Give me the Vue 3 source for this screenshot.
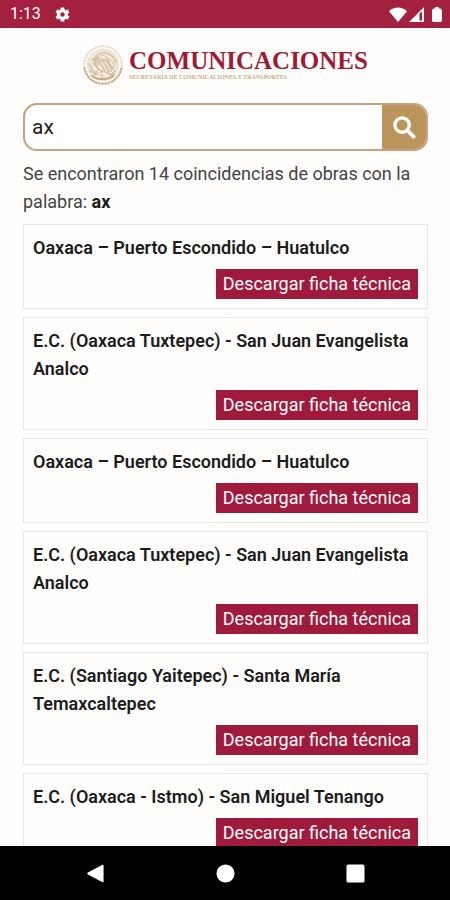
<script setup>
import { ref } from 'vue'

const query = ref('ax')
const total = 14
const works = [
  'Oaxaca – Puerto Escondido – Huatulco',
  'E.C. (Oaxaca Tuxtepec) - San Juan Evangelista Analco',
  'Oaxaca – Puerto Escondido – Huatulco',
  'E.C. (Oaxaca Tuxtepec) - San Juan Evangelista Analco',
  'E.C. (Santiago Yaitepec) - Santa María Temaxcaltepec',
  'E.C. (Oaxaca - Istmo) - San Miguel Tenango',
]
</script>

<template>
  <div class="screen">
    <div class="status">
      <div class="status-group">
        <span class="clock">1:13</span>
        <svg class="gear" viewBox="0 0 24 24" aria-hidden="true">
          <path fill="currentColor" fill-rule="evenodd" d="M19.4 13c.1-.3.1-.7.1-1s0-.7-.1-1l2.100-1.600c.2-.2.3-.4.100-.700l-2-3.400c-.1-.3-.4-.3-.6-.3l-2.500 1c-.5-.4-1.100-.7-1.700-1L14.400 2.400c0-.2-.2-.4-.5-.4h-4c-.2 0-.4.2-.5.4L9.100 5c-.6.300-1.200.600-1.700 1l-2.500-1c-.2-.1-.5 0-.6.300l-2 3.400c-.1.200-.1.500.1.700L4.500 11c0 .300-.1.700-.1 1s0 .7.100 1l-2.100 1.600c-.2.200-.2.400-.1.700l2 3.400c.1.300.4.300.6.300l2.500-1c.5.400 1.100.700 1.700 1l.4 2.600c0 .2.200.4.500.4h4c.2 0 .4-.2.500-.4l.4-2.600c.6-.3 1.200-.6 1.700-1l2.500 1c.2.100.5 0 .6-.3l2-3.400c.1-.2.100-.5-.1-.7L19.400 13zM12 15.200a3.200 3.200 0 1 1 0-6.400 3.200 3.200 0 0 1 0 6.400z" />
        </svg>
      </div>
      <div class="status-group signals">
        <svg class="wifi" viewBox="0 0 18 15" aria-hidden="true">
          <path fill="currentColor" d="M0 4.200C5-.8 13-.8 18 4.200L9 15z" />
        </svg>
        <svg class="cell" viewBox="0 0 15 15" aria-hidden="true">
          <path fill="currentColor" fill-rule="evenodd" d="M15 0V15H0zM10.500 6.500V13.500H13V4.500z" />
        </svg>
        <svg class="battery" viewBox="0 0 10 15" aria-hidden="true">
          <path fill="currentColor" d="M3 0h4v1.500h1.500L10 3v11l-1 1H1l-1-1V3l1.500-1.500H3z" />
        </svg>
      </div>
    </div>

    <header class="brand">
      <svg class="seal" viewBox="0 0 42 42" aria-hidden="true">
        <circle cx="21" cy="21" r="18.800" fill="none" stroke="#e0d0b9" stroke-width="2" stroke-dasharray="1.500 1" />
        <path d="M2.300 23C4 33 11 39.700 21 39.700S38 33 39.700 23" fill="none" stroke="#cdb28d" stroke-width="2.200" stroke-dasharray="2.500 .7" />
        <circle cx="21" cy="21" r="15.800" fill="#f1e8dc" stroke="#e6d9c6" stroke-width=".8" />
        <g fill="none" stroke-linecap="round" stroke-linejoin="round">
          <path d="M12 17c1-5 5-8 10-8 6 0 10 4 12 9M12 20c2-5 5-8 9-8 6 0 9 5 11 11M15 21c2-4 4-6 7-5 4 1 6 5 7 11" stroke="#dccab0" stroke-width="2.200" />
          <path d="M10 16l4-3 3 2-3 2-1 4 4 5 5 2M21 17l6 11M25 15l6 10M18 19l5 8" stroke="#d2bb97" stroke-width="1.300" />
          <path d="M7 20c2 3 2 5 5 7M8 27l6 3 6-1M15 26l-3 7M20 27v6M24 28l5 3 4-4" stroke="#d5bf9f" stroke-width="1.500" />
          <path d="M10 32c4 3 7 3 11 3s8-1 11-4" stroke="#c8aa80" stroke-width="2" stroke-dasharray="3 1" />
          <path d="M18 12l5 1M24 11l5 4M28 17l3 5M11 24l4 2M17 30l5-1" stroke="#faf6f0" stroke-width="1.200" />
        </g>
      </svg>
      <div class="wordmark">
        <span class="name">COMUNICACIONES</span>
        <span class="ministry">SECRETARÍA DE COMUNICACIONES Y TRANSPORTES</span>
      </div>
    </header>

    <main class="content">
      <form class="search" @submit.prevent>
        <input v-model="query" class="field" type="text" aria-label="Buscar obras" />
        <button class="go" type="submit" aria-label="Buscar">
          <svg viewBox="0 0 24 24" aria-hidden="true">
            <circle cx="9.500" cy="9.500" r="7.500" fill="none" stroke="currentColor" stroke-width="3.500" />
            <path d="M15.500 15.500L21.500 21.500" stroke="currentColor" stroke-width="4" stroke-linecap="round" />
          </svg>
        </button>
      </form>
      <p class="summary">
        Se encontraron {{ total }} coincidencias de obras con la palabra: <strong>{{ query }}</strong>
      </p>
      <ul class="results">
        <li v-for="(title, i) in works" :key="i" class="card">
          <h2 class="title">{{ title }}</h2>
          <button class="download" type="button">Descargar ficha técnica</button>
        </li>
      </ul>
    </main>

    <nav class="system">
      <button type="button" aria-label="Atrás">
        <svg viewBox="0 0 20 20"><path fill="currentColor" d="M17.500.800Q18.500.500 18.500 1.500V18.500Q18.500 19.500 17.500 19.200L2 11Q.500 10 2 9z" /></svg>
      </button>
      <button type="button" aria-label="Inicio">
        <svg viewBox="0 0 20 20"><circle cx="10" cy="10" r="9.500" fill="currentColor" /></svg>
      </button>
      <button type="button" aria-label="Recientes">
        <svg viewBox="0 0 20 20"><rect x=".500" y=".500" width="19" height="19" rx="2" fill="currentColor" /></svg>
      </button>
    </nav>
  </div>
</template>

<style>
body {
  margin: 0;
}
</style>

<style scoped>
.screen {
  display: flex;
  flex-direction: column;
  height: 100vh;
  background: #fffefd;
  color: #1c1c1c;
  font-family: Roboto, "Liberation Sans", sans-serif;
  font-size: 18px;
  line-height: 28px;
}

.screen * {
  box-sizing: border-box;
}

.status {
  display: flex;
  flex: none;
  align-items: center;
  justify-content: space-between;
  height: 28px;
  padding: 0 8px 0 10px;
  background: #a3203f;
  color: #fff;
}

.status-group {
  display: flex;
  align-items: center;
  gap: 13px;
}

.signals {
  gap: 2px;
}

.clock {
  font-size: 16px;
}

.gear {
  width: 17px;
  height: 17px;
}

.wifi {
  width: 18px;
  height: 15px;
}

.cell {
  width: 15px;
  height: 15px;
}

.battery {
  width: 10px;
  height: 15px;
  margin-left: 6px;
}

.brand {
  display: flex;
  flex: none;
  align-items: center;
  justify-content: center;
  gap: 5px;
  padding: 16px 0 17px;
}

.seal {
  width: 42px;
  height: 42px;
}

.wordmark {
  display: flex;
  flex-direction: column;
  font-family: "Liberation Serif", serif;
  font-weight: 700;
}

.name {
  color: #a01a35;
  font-size: 25px;
  line-height: 24px;
}

.ministry {
  color: #c9ad84;
  font-size: 6px;
  line-height: 8px;
}

.content {
  flex: 1;
  min-height: 0;
  padding: 0 22px 0 23px;
  overflow-y: auto;
  scrollbar-width: none;
}

.search {
  display: flex;
  height: 48px;
  overflow: hidden;
  border: 2px solid #c9a27c;
  border-radius: 14px;
  background: #fff;
}

.field {
  flex: 1;
  min-width: 0;
  padding: 0 7px;
  border: 0;
  outline: 0;
  background: transparent;
  color: inherit;
  font: inherit;
  font-size: 21px;
}

.go {
  display: grid;
  place-items: center;
  width: 44px;
  padding: 0;
  border: 0;
  background: #bc955c;
  color: #fff;
}

.go svg {
  width: 23px;
  height: 23px;
}

.summary {
  margin: 9px 0 8px;
  color: #444;
}

.summary strong {
  color: #1c1c1c;
}

.results {
  display: flex;
  flex-direction: column;
  gap: 8px;
  margin: 0;
  padding: 0;
  list-style: none;
}

.card {
  display: flex;
  flex-direction: column;
  align-items: flex-end;
  gap: 7px;
  padding: 9px;
  border: 1px solid #e9e3e1;
}

.title {
  align-self: stretch;
  margin: 0;
  font-size: 18px;
  font-weight: 600;
}

.download {
  height: 30px;
  padding: 0 7px;
  border: 0;
  background: #a01a3c;
  color: #fff;
  font: inherit;
}

.system {
  display: flex;
  flex: none;
  align-items: center;
  justify-content: space-around;
  height: 54px;
  padding: 0 30px;
  background: #000;
  color: #fff;
}

.system button {
  display: grid;
  place-items: center;
  padding: 0;
  border: 0;
  background: none;
  color: inherit;
}

.system svg {
  width: 19px;
  height: 19px;
}
</style>
